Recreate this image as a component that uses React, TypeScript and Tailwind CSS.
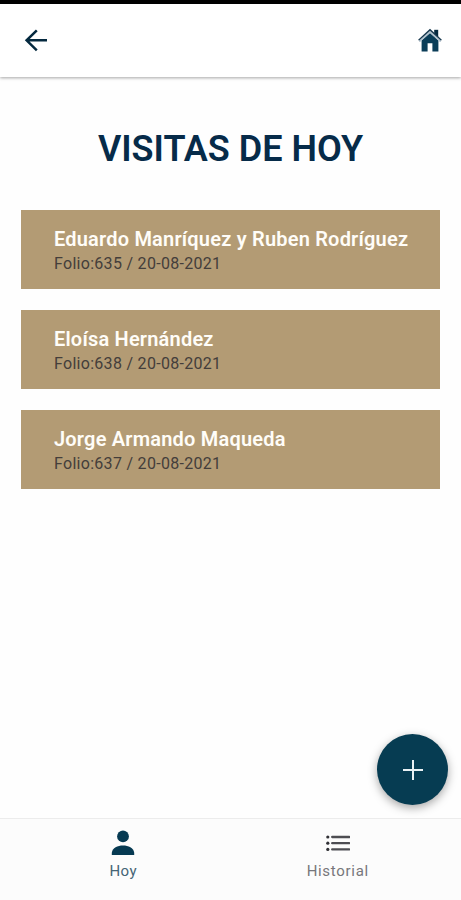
import React from 'react';

const VISITS = [
  { name: 'Eduardo Manríquez y Ruben Rodríguez', folio: 635, date: '20-08-2021' },
  { name: 'Eloísa Hernández', folio: 638, date: '20-08-2021' },
  { name: 'Jorge Armando Maqueda', folio: 637, date: '20-08-2021' },
];

const BackIcon: React.FC = () => (
  <svg width="24" height="24" viewBox="0 0 24 24" fill="none" stroke="#04293f" strokeWidth="2.5">
    <path d="M23 12.3H2.5M12.8 2.3L2.6 12.3l10.2 10" />
  </svg>
);

const HomeIcon: React.FC = () => (
  <svg width="24" height="24" viewBox="0 0 24 24">
    <path d="M16.2 1.8h4v7.5h-4z" fill="#04293f" />
    <path d="M3.6 12.5L12 5l8.4 7.5v11H14.4v-8.3H9.6v8.3H3.6z" fill="#0a3d58" />
    <path d="M1 12.6L12 2.4l11 10.2" fill="none" stroke="#17384e" strokeWidth="2.6" />
    <path d="M1.4 13.4L12 3.8l10.6 9.6" fill="none" stroke="#b4c4d0" strokeWidth="1.6" />
  </svg>
);

const PersonIcon: React.FC = () => (
  <svg width="24" height="26" viewBox="0 0 24 26" fill="#063a52">
    <circle cx="12" cy="6.4" r="5.9" />
    <path d="M.8 25v-2.2C1.4 17.4 6.6 15.4 12 15.4s10.6 2 11.2 7.4V25z" />
  </svg>
);

const ListIcon: React.FC = () => (
  <svg width="24" height="18" viewBox="0 0 24 18">
    <path d="M6.2 3h17M6.2 9.2h17M6.2 15.4h17" stroke="#4d4d52" strokeWidth="2.3" strokeLinecap="round" />
    <g fill="#303035">
      <circle cx="1.8" cy="3" r="1.6" />
      <circle cx="1.8" cy="9.2" r="1.6" />
      <circle cx="1.8" cy="15.4" r="1.6" />
    </g>
  </svg>
);

export default function App() {
  return (
    <div className="relative flex h-[900px] w-[461px] flex-col overflow-hidden bg-[#fefefe] font-['Roboto',sans-serif]">
      {/* Header */}
      <header className="flex h-[77px] shrink-0 items-center justify-between border-t-4 border-black bg-white pr-[19px] pb-0.5 pl-6 shadow-[0_1px_3px_rgba(0,0,0,0.35)]">
        <button aria-label="Volver"><BackIcon /></button>
        <button aria-label="Inicio"><HomeIcon /></button>
      </header>

      {/* Visits */}
      <main className="flex-1 px-[21px] pt-[50px]">
        <h1 className="text-center text-[36px] leading-[44px] font-semibold whitespace-nowrap text-[#062b49]">VISITAS DE HOY</h1>
        <div className="mt-[39px] flex flex-col gap-[21px]">
          {VISITS.map((visit) => (
            <div key={visit.folio} className="h-[79px] bg-[#b39b74] pt-[17px] pl-[33px]">
              <div className="text-[20px] leading-[25px] font-semibold tracking-[0.2px] whitespace-nowrap text-[#fffdf8]">{visit.name}</div>
              <div className="text-[16px] leading-[23px] tracking-[0.29px] text-[#443e3b]">
                Folio:{visit.folio} / {visit.date}
              </div>
            </div>
          ))}
        </div>
      </main>

      <button
        aria-label="Agregar"
        className="absolute right-[13px] bottom-[95px] flex size-[71px] items-center justify-center rounded-full bg-[#063c52] shadow-[0_3px_10px_rgba(0,0,0,0.35)]"
      >
        <svg width="20" height="20" viewBox="0 0 20 20" stroke="#e9f1f4" strokeWidth="2">
          <path d="M10 0v20M0 10h20" />
        </svg>
      </button>

      {/* Bottom tabs */}
      <nav className="flex h-[82px] shrink-0 border-t border-[#ececec] bg-[#fcfcfc] px-4 text-[15px] leading-5">
        <div className="flex flex-1 flex-col items-center pt-[11px] text-[#456575]">
          <PersonIcon />
          <span className="mt-[5px] tracking-[0.5px]">Hoy</span>
        </div>
        <div className="flex flex-1 flex-col items-center pt-[15px] text-[#77777b]">
          <ListIcon />
          <span className="mt-[9px] tracking-[0.7px]">Historial</span>
        </div>
      </nav>
    </div>
  );
}
